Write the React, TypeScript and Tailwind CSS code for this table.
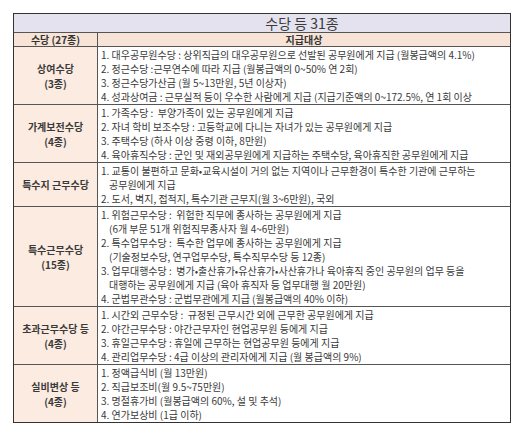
const rows: { label: string[]; lines: { text: string; indent?: boolean }[] }[] = [
  {
    label: ["상여수당", "(3종)"],
    lines: [
      { text: "1. 대우공무원수당 : 상위직급의 대우공무원으로 선발된 공무원에게 지급 (월봉급액의 4.1%)" },
      { text: "2. 정근수당 :근무연수에 따라 지급 (월봉급액의 0~50% 연 2회)" },
      { text: "3. 정근수당가산금 (월 5~13만원, 5년 이상자)" },
      { text: "4. 성과상여금 : 근무실적 등이 우수한 사람에게 지급 (지급기준액의 0~172.5%, 연 1회 이상" },
    ],
  },
  {
    label: ["가계보전수당", "(4종)"],
    lines: [
      { text: "1. 가족수당 :  부양가족이 있는 공무원에게 지급" },
      { text: "2. 자녀 학비 보조수당 : 고등학교에 다니는 자녀가 있는 공무원에게 지급" },
      { text: "3. 주택수당 (하사 이상 중령 이하, 8만원)" },
      { text: "4. 육아휴직수당 : 군인 및 재외공무원에게 지급하는 주택수당, 육아휴직한 공무원에게 지급" },
    ],
  },
  {
    label: ["특수지 근무수당"],
    lines: [
      { text: "1. 교통이 불편하고 문화•교육시설이 거의 없는 지역이나 근무환경이 특수한 기관에 근무하는" },
      { text: "공무원에게 지급", indent: true },
      { text: "2. 도서, 벽지, 접적지, 특수기관 근무지(월 3~6만원), 국외" },
    ],
  },
  {
    label: ["특수근무수당", "(15종)"],
    lines: [
      { text: "1. 위험근무수당 :  위험한 직무에 종사하는 공무원에게 지급" },
      { text: "(6개 부문 51개 위험직무종사자 월 4~6만원)", indent: true },
      { text: "2. 특수업무수당 :  특수한 업무에 종사하는 공무원에게 지급" },
      { text: "(기술정보수당, 연구업무수당, 특수직무수당 등 12종)", indent: true },
      { text: "3. 업무대행수당 :  병가•출산휴가•유산휴가•사산휴가나 육아휴직 중인 공무원의 업무 등을" },
      { text: "대행하는 공무원에게 지급 (육아 휴직자 등 업무대행 월 20만원)", indent: true },
      { text: "4. 군법무관수당 : 군법무관에게 지급 (월봉급액의 40% 이하)" },
    ],
  },
  {
    label: ["초과근무수당 등", "(4종)"],
    lines: [
      { text: "1. 시간외 근무수당 :  규정된 근무시간 외에 근무한 공무원에게 지급" },
      { text: "2. 야간근무수당 : 야간근무자인 현업공무원 등에게 지급" },
      { text: "3. 휴일근무수당 : 휴일에 근무하는 현업공무원 등에게 지급" },
      { text: "4. 관리업무수당 : 4급 이상의 관리자에게 지급 (월 봉급액의 9%)" },
    ],
  },
  {
    label: ["실비변상 등", "(4종)"],
    lines: [
      { text: "1. 정액급식비 (월 13만원)" },
      { text: "2. 직급보조비(월 9.5~75만원)" },
      { text: "3. 명절휴가비 (월봉급액의 60%, 설 및 추석)" },
      { text: "4. 연가보상비 (1급 이하)" },
    ],
  },
];

export default function App() {
  return (
    <div className="w-[530px] h-[435px] bg-white pt-[13px] pl-[13px] font-['Noto_Sans_CJK_KR','Malgun_Gothic',sans-serif] text-[#333]">
      <div className="w-[498px] border border-[#333] overflow-hidden">
        {/* title */}
        <div className="h-[19px] bg-[#e4e2ee] border-b border-[#555] flex items-center justify-center pl-[80px] text-[14px] leading-[19px] text-[#3a3a3a]">
          수당 등 31종
        </div>
        {/* header */}
        <div className="flex h-[14px] bg-[#f7e4d7] border-b border-[#555] text-[10px] leading-[14px] font-bold">
          <div className="w-[84px] shrink-0 border-r border-[#555] text-center">수당 (27종)</div>
          <div className="flex-1 text-center">지급대상</div>
        </div>
        {rows.map((row, i) => (
          <div
            key={i}
            className={`flex ${i < rows.length - 1 ? "border-b border-[#555]" : ""}`}
          >
            <div className="w-[84px] shrink-0 bg-[#fbebe0] border-r border-[#555] flex flex-col items-center justify-center text-[10px] leading-[15px] font-bold text-[#3a3a3a]">
              {row.label.map((l) => (
                <div key={l} className="whitespace-nowrap">{l}</div>
              ))}
            </div>
            <div className="flex-1 min-w-0 pl-[3px] pt-[1px] text-[10px] leading-[14px] text-[#3a3a3a]">
              {row.lines.map((ln, j) => (
                <div
                  key={j}
                  className={`whitespace-pre overflow-hidden ${ln.indent ? "pl-[8px]" : ""}`}
                >
                  {ln.text}
                </div>
              ))}
            </div>
          </div>
        ))}
      </div>
    </div>
  );
}
